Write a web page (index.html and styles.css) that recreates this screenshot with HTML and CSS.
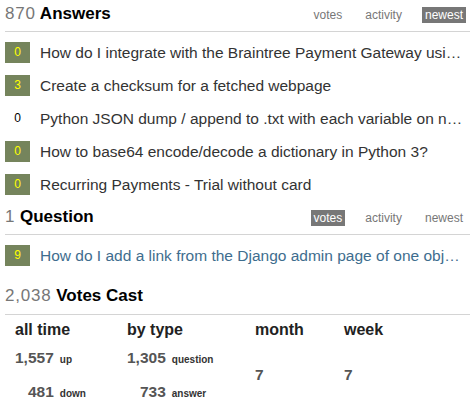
FILE: index.html
```html
<!DOCTYPE html>
<html>
<head>
<meta charset="utf-8">
<link rel="stylesheet" href="styles.css">
</head>
<body>
<div class="page">
  <section class="block">
    <div class="head">
      <h2 class="title"><span class="count">870</span> Answers</h2>
      <nav class="tabs"><a class="tab">votes</a><a class="tab">activity</a><a class="tab on">newest</a></nav>
    </div>
    <ul class="posts">
      <li class="post"><span class="score acc">0</span><a class="link">How do I integrate with the Braintree Payment Gateway using Python and Django?</a></li>
      <li class="post"><span class="score acc">3</span><a class="link">Create a checksum for a fetched webpage</a></li>
      <li class="post"><span class="score">0</span><a class="link">Python JSON dump / append to .txt with each variable on new line</a></li>
      <li class="post"><span class="score acc">0</span><a class="link">How to base64 encode/decode a dictionary in Python 3?</a></li>
      <li class="post"><span class="score acc">0</span><a class="link">Recurring Payments - Trial without card</a></li>
    </ul>
  </section>
  <section class="block qblock">
    <div class="head">
      <h2 class="title"><span class="count">1</span> Question</h2>
      <nav class="tabs"><a class="tab on">votes</a><a class="tab">activity</a><a class="tab">newest</a></nav>
    </div>
    <ul class="posts">
      <li class="post"><span class="score acc">9</span><a class="link q">How do I add a link from the Django admin page of one object to another?</a></li>
    </ul>
  </section>
  <section class="block">
    <div class="head vhead">
      <h2 class="title"><span class="count">2,038</span> Votes Cast</h2>
    </div>
    <div class="votes">
      <div class="vcol c1">
        <div class="vh">all time</div>
        <div class="pairs">
          <span class="num">1,557</span><span class="lbl">up</span>
          <span class="num">481</span><span class="lbl">down</span>
        </div>
      </div>
      <div class="vcol c2">
        <div class="vh">by type</div>
        <div class="pairs">
          <span class="num">1,305</span><span class="lbl">question</span>
          <span class="num">733</span><span class="lbl">answer</span>
        </div>
      </div>
      <div class="vcol c3">
        <div class="vh">month</div>
        <div class="single"><span class="num">7</span></div>
      </div>
      <div class="vcol">
        <div class="vh">week</div>
        <div class="single"><span class="num">7</span></div>
      </div>
    </div>
  </section>
</div>
</body>
</html>
```
FILE: styles.css
```css
html, body {
  margin: 0;
  padding: 0;
  background: #fff;
}
body {
  font-family: "Liberation Sans", Arial, sans-serif;
  color: #333;
  width: 476px;
  height: 410px;
  overflow: hidden;
}
.page {
  padding: 4px 6px 0 5px;
}
.head {
  display: flex;
  justify-content: space-between;
  align-items: flex-start;
  padding-bottom: 7px;
  border-bottom: 1px solid #d4d4d4;
}
.title {
  margin: 0;
  font-size: 17px;
  line-height: 20px;
  font-weight: bold;
  color: #000;
}
.count {
  font-weight: normal;
  color: #777;
  letter-spacing: 0.8px;
}
.tabs {
  display: flex;
  margin-top: 3px;
  margin-right: 4px;
}
.tab {
  font-size: 12px;
  line-height: 14px;
  padding: 1px 3px;
  margin-left: 17px;
  color: #777;
}
.tab.on {
  background: #777;
  color: #fff;
}
.posts {
  list-style: none;
  margin: 10px 0 0 0;
  padding: 0;
}
.post {
  display: flex;
  align-items: center;
  height: 21px;
  margin-bottom: 12px;
}
.score {
  flex: 0 0 25px;
  height: 21px;
  line-height: 21px;
  text-align: center;
  font-size: 12px;
  color: #000;
}
.score.acc {
  background: #75845c;
  color: #ffff00;
}
.link {
  margin-left: 10px;
  font-size: 15.5px;
  line-height: 21px;
  color: #333;
  white-space: nowrap;
  overflow: hidden;
  text-overflow: ellipsis;
  width: 426px;
}
.link.q {
  color: #3e6d8e;
}
.qblock {
  padding-bottom: 8px;
}
.vhead {
  padding-bottom: 8px;
}
.votes {
  display: flex;
  padding: 6px 0 0 10px;
}
.vcol {
  display: flex;
  flex-direction: column;
}
.c1 { width: 112px; }
.c2 { width: 128px; }
.c3 { width: 89px; }
.vh {
  font-size: 16px;
  line-height: 18px;
  font-weight: bold;
  color: #222;
  margin-bottom: 2px;
}
.pairs {
  display: grid;
  grid-template-columns: auto auto;
  justify-content: start;
  column-gap: 6px;
  grid-auto-rows: 34px;
  align-items: baseline;
}
.num {
  font-size: 15.5px;
  line-height: 34px;
  font-weight: bold;
  color: #555;
  text-align: right;
}
.lbl {
  font-size: 10px;
  font-weight: bold;
  color: #333;
}
.single {
  height: 68px;
  display: flex;
  align-items: center;
}
```
